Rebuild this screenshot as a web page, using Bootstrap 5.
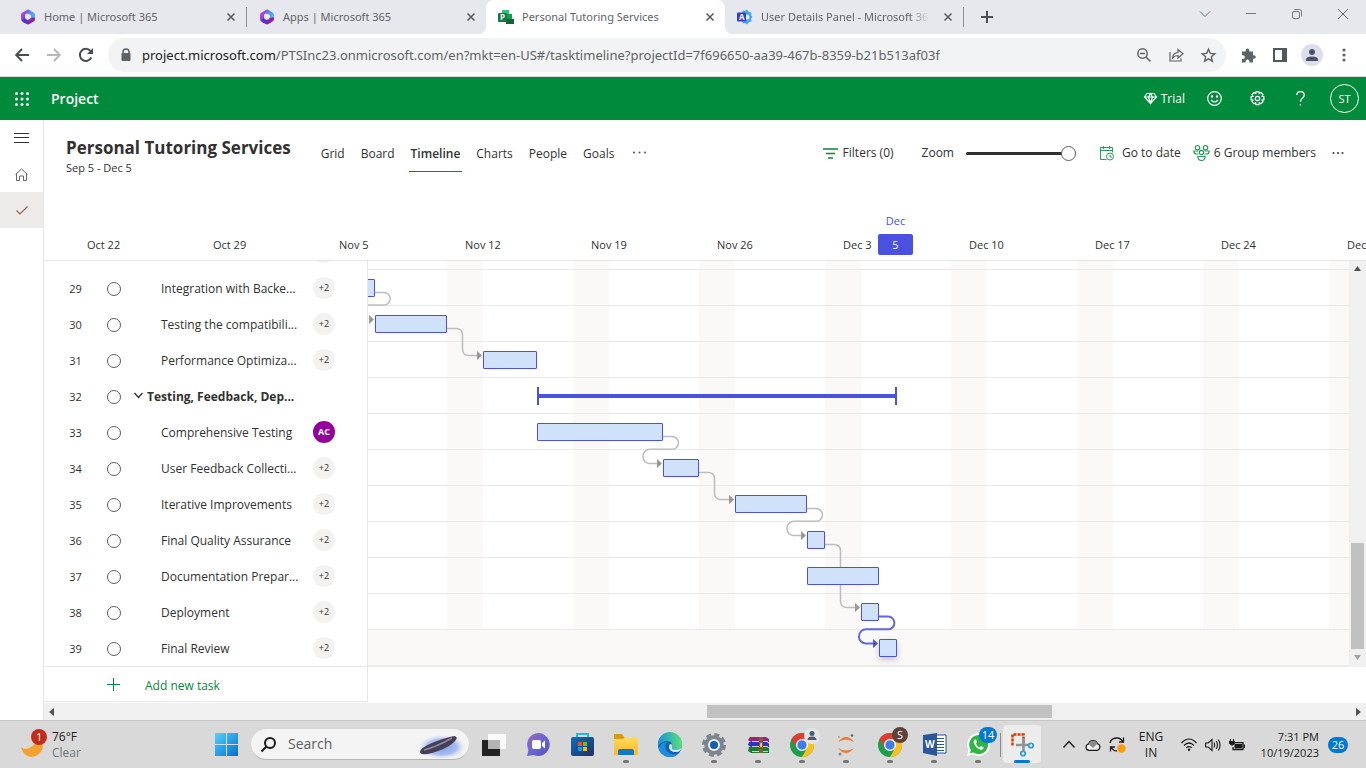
<!DOCTYPE html>
<html lang="en">
<head>
<meta charset="utf-8">
<meta name="viewport" content="width=device-width, initial-scale=1">
<title>Personal Tutoring Services</title>
<link href="https://cdn.jsdelivr.net/npm/bootstrap@5.3.0/dist/css/bootstrap.min.css" rel="stylesheet">
<style>
  :root { --ink:#323130; --line:#e6e6e6; --brand:#008a3c; --day:18px; --blue:#4a50df; }
  body { font-family:"Open Sans","Noto Sans",sans-serif; font-size:12px; line-height:16px; color:var(--ink); height:100vh; min-height:768px; overflow:hidden; }
  button { border:0; background:none; padding:0; color:inherit; font:inherit; display:inline-flex; align-items:center; justify-content:center; flex:none; }
  svg { display:block; flex:none; overflow:visible; }
  a { color:inherit; text-decoration:none; }

  .tabstrip { height:34px; background:#e7e8ed; padding-left:8px; color:#5f6368; }
  .wtab { width:239px; padding:0 5px 0 12px; position:relative; height:34px; }
  .wtab .ttl { overflow:hidden; flex:1; font-family:"Noto Sans","Open Sans",sans-serif; font-size:11px; }
  .wtab .fade-out { -webkit-mask-image:linear-gradient(90deg,#000 88%,transparent); mask-image:linear-gradient(90deg,#000 88%,transparent); }
  .wtab.sep { border-right:1px solid #8c8f94; height:20px; }
  .wtab.on { background:#fff; border-radius:8px 8px 0 0; }
  .wtab.on::before, .wtab.on::after { content:""; position:absolute; bottom:0; width:8px; height:8px; }
  .wtab.on::before { left:-8px; background:radial-gradient(circle at 0 0,transparent 8px,#fff 8px); }
  .wtab.on::after { right:-8px; background:radial-gradient(circle at 100% 0,transparent 8px,#fff 8px); }
  .xbtn { width:20px; }
  .winbtn { width:46px; height:28px; }

  .toolbar { height:43px; border-bottom:1px solid #d4d6d8; padding:0 6px; color:#5f6368; }
  .tb { width:32px; height:32px; }
  .omni { background:#f1f3f4; border-radius:17px; height:34px; padding:0 2px 0 12px; margin-left:6px; margin-right:6px; }
  .omni .url { font-family:"Noto Sans","Open Sans",sans-serif; font-size:13px; line-height:20px; white-space:nowrap; overflow:hidden; margin-left:10px; }
  .omni .url b { font-weight:400; color:#202124; }

  .suite { background:var(--brand); height:43px; color:#fff; padding-right:7px; }
  .suite .brandname { font-size:14px; font-weight:600; }
  .sbtn { width:43px; height:43px; }
  .me { width:29px; height:29px; border:1px solid #fff; border-radius:50%; font-size:11px; }

  .rail { width:44px; border-right:1px solid var(--line); }
  .rail button { height:36px; width:100%; }
  .rail .sel { background:#edebe9; }

  .phead { height:105px; padding-left:22px; }
  .phead h1 { font-size:17px; line-height:24px; font-weight:700; margin:0; }
  .phead .span-dates { font-size:11px; }
  .views { padding-top:17px; }
  .views a { display:block; padding:9px 2px; line-height:16px; }
  .views a.act { font-weight:600; border-bottom:1px solid var(--brand); }
  .cmds { height:66px; padding-right:22px; }
  .zoomer { -webkit-appearance:none; appearance:none; width:110px; height:16px; background:none; margin:0; }
  .zoomer::-webkit-slider-runnable-track { height:3px; border-radius:2px; background:#323130; }
  .zoomer::-webkit-slider-thumb { -webkit-appearance:none; width:15px; height:15px; margin-top:-6px; border-radius:50%; background:#fff; border:1px solid #605e5c; }

  .dates { height:36px; display:grid; grid-auto-flow:column; grid-auto-columns:126px; justify-content:start; padding-left:43px; border-bottom:1px solid var(--line); overflow:hidden; font-size:11px; padding-top:12px; }
  .today { position:absolute; left:calc(43px + 126px * 6 + 35px); top:93px; width:35px; font-size:11px; text-align:center; color:var(--blue); }
  .today span { display:block; background:var(--blue); color:#fff; border-radius:2px; line-height:21px; margin-top:5px; }

  .board { overflow:hidden; height:406px; }
  .tasks { width:324px; border-right:1px solid var(--line); overflow:hidden; }
  .tasks table { width:323px; table-layout:fixed; margin-top:-27px; border-collapse:collapse; }
  .tasks tr { height:36px; }
  .tasks td { padding:2px 0 0; vertical-align:middle; }
  .tasks .num { width:63px; text-align:center; font-size:11px; }
  .tasks .tick { width:27px; }
  .tasks .who { width:54px; padding-top:0; }
  .tasks .nm { white-space:nowrap; padding-left:27px; }
  .tasks .nm.grp { padding-left:0; font-weight:700; }
  .ring { -webkit-appearance:none; appearance:none; width:14px; height:14px; border:1px solid #605e5c; border-radius:50%; display:block; margin:0; }
  .pill { width:22px; height:22px; border-radius:50%; background:#f3f2f1; font-size:9px; display:flex; align-items:center; justify-content:center; }
  .pill.ac { background:#94009a; color:#fff; font-weight:700; }
  .addrow { height:36px; width:324px; margin-top:-1px; border:1px solid var(--line); border-left:0; background:#fff; color:var(--brand); padding-left:63px; gap:25px; position:relative; }

  .gantt { overflow:hidden; position:relative; }
  .gantt .lanes { margin-top:-27px; background:repeating-linear-gradient(90deg,transparent 0 79px,#faf9f8 79px 115px,transparent 115px 126px); }
  .lane { height:36px; border-bottom:1px solid #e9e9e9; padding-top:9px; }
  .lane.last { height:37px; border-bottom:2px solid #edebe9; background:#faf9f8; }
  .tbar { height:18px; position:relative; z-index:2; border:1px solid var(--blue); border-radius:1px; background:#cfe2fa; margin-left:calc(7px + var(--day) * var(--at)); width:calc(var(--day) * var(--len)); }
  .lane.last .tbar { box-shadow:0 3px 6px rgba(0,0,0,.2); }
  .tbar.sum { background:linear-gradient(var(--blue),var(--blue)) center/100% 4px no-repeat; border-width:0 2px; border-radius:0; }
  .links { position:absolute; left:0; top:0; z-index:1; }

  .vbar { width:17px; background:#f0f0f0; padding:5px 2px 7px; }
  .vbar i { display:block; height:106px; background:#c1c1c1; width:13px; margin-top:auto; margin-bottom:6px; }
  .hbar { height:17px; background:#f0f0f0; padding:0 5px; }
  .hbar i { display:block; height:13px; background:#c1c1c1; }

  .taskbar { height:48px; background:#d9d9d9; border-top:1px solid #c6c6c6; color:#1b1b1b; }
  .wx { width:204px; padding-left:20px; }
  .ti { width:44px; height:47px; position:relative; }
  .ti.run::after { content:""; position:absolute; bottom:5px; left:19px; width:6px; height:3px; border-radius:2px; background:#767676; }
  .ti.cur::before { content:""; position:absolute; left:3px; top:4px; width:38px; height:38px; border-radius:4px; background:#ececec; }
  .ti.cur::after { left:14px; width:16px; background:#0078d4; }
  .ti svg { position:relative; z-index:1; }
  .seek { width:218px; height:31px; margin:0 3px; border-radius:16px; background:#f4f4f4; border-bottom:1px solid #b5b5b5; overflow:hidden; padding-left:10px; }
  .seek input { border:0; background:none; outline:0; font-size:14px; width:130px; padding:0; color:#606060; }
  .seek input::placeholder { color:#606060; }
  .bub { position:absolute; z-index:3; border-radius:9px; font-size:11px; line-height:16px; height:16px; text-align:center; color:#fff; }
  .bub.who-a { right:4px; top:7px; width:16px; background:#e1e5ea; }
  .bub.who-s { right:4px; top:6px; width:16px; background:#5d4037; }
  .bub.cnt { right:3px; top:6px; width:18px; background:#0078d4; }
  .tdiv { width:1px; height:24px; margin-right:-1px; background:#8a8a8a; }
  .trayb { width:24px; height:40px; }
  .lang { width:48px; padding-right:4px; }
  .clock { width:70px; font-size:11px; }
  .num26 { width:20px; height:16px; border-radius:8px; background:#0078d4; color:#fff; font-size:11px; text-align:center; margin-left:9px; margin-right:18px; }
</style>
</head>
<body class="d-flex flex-column bg-white">

<!-- shared symbols -->
<svg width="0" height="0" class="position-absolute">
  <defs>
    <linearGradient id="g1" x1="0" y1="0" x2="1" y2="1"><stop offset="0" stop-color="#c84bea"/><stop offset="1" stop-color="#5b2fc0"/></linearGradient>
    <linearGradient id="g2" x1="0" y1="0" x2="1" y2="1"><stop offset="0" stop-color="#5468e8"/><stop offset="1" stop-color="#55c8f5"/></linearGradient>
    <linearGradient id="g3" x1="0" y1="0" x2="1" y2="1"><stop offset="0" stop-color="#55d0ff"/><stop offset="1" stop-color="#0070d0"/></linearGradient>
    <linearGradient id="g4" x1="0" y1="0" x2="1" y2="0"><stop offset="0" stop-color="#1590dc"/><stop offset="1" stop-color="#5be07a"/></linearGradient>
    <linearGradient id="g5" x1="0" y1="0" x2="0" y2="1"><stop offset="0" stop-color="#ffdc5a"/><stop offset="1" stop-color="#f9b92b"/></linearGradient>
    <linearGradient id="g6" x1="0" y1="0" x2="1" y2="1"><stop offset="0" stop-color="#0f6cbf"/><stop offset="1" stop-color="#1d3263"/></linearGradient>
    <radialGradient id="g7"><stop offset="0" stop-color="#7fa0e8"/><stop offset=".6" stop-color="#a9bdf0"/><stop offset="1" stop-color="#f4f4f4" stop-opacity="0"/></radialGradient>
    <linearGradient id="g8" x1="0" y1="0" x2="1" y2="1"><stop offset="0" stop-color="#9a68b8"/><stop offset=".5" stop-color="#6a66d6"/><stop offset="1" stop-color="#5550c0"/></linearGradient>
    <symbol id="m365" viewBox="0 0 16 16"><path d="M8 .5 2.500 3.400Q1 4.300 1 6v4q0 1.800 1.500 2.600L5 14V6.500Q5 5 6.500 4.300L11 2z" fill="url(#g1)"/><path d="m8 .5 5.500 3Q15 4.300 15 6v4.500L11 8V7Q11 5.500 9 5L6 4.500 7.500 1z" fill="url(#g2)"/><path d="M15 8.500V10q0 1.700-1.500 2.600L9.500 15q-1.500.8-3 0L3 13l4.500-2 3.500-2.500z" fill="#8a1fb0"/><path d="M1.500 11.500 5 9l3 2.500L5 14z" fill="#3f3bd0"/><circle cx="8" cy="8" r="2.600" fill="#e7e8ed"/></symbol>
    <symbol id="x" viewBox="0 0 10 10"><path d="m1.500 1.500 7 7m0-7-7 7" stroke="#55585d" stroke-width="1.500"/></symbol>
    <symbol id="chrome" viewBox="0 0 24 24"><circle cx="12" cy="12" r="12" fill="#1e9e4a"/><path d="M1.600 6A12 12 0 0 1 22.400 6H12l-5.200 9z" fill="#e33b2e"/><path d="M22.400 6A12 12 0 0 1 12 24l5.200-9L12 6z" fill="#fbc116"/><circle cx="12" cy="12" r="6" fill="#fff"/><circle cx="12" cy="12" r="4.700" fill="#3b7ded"/></symbol>
  </defs>
</svg>

<!-- browser tabs -->
<div class="tabstrip d-flex align-items-center flex-shrink-0">
  <div class="wtab sep d-flex align-items-center gap-2"><svg width="16" height="16"><use href="#m365"/></svg><span class="ttl text-nowrap">Home | Microsoft 365</span><button class="xbtn" aria-label="Close tab"><svg width="10" height="10"><use href="#x"/></svg></button></div>
  <div class="wtab d-flex align-items-center gap-2"><svg width="16" height="16"><use href="#m365"/></svg><span class="ttl text-nowrap">Apps | Microsoft 365</span><button class="xbtn" aria-label="Close tab"><svg width="10" height="10"><use href="#x"/></svg></button></div>
  <div class="wtab on d-flex align-items-center gap-2">
    <svg width="16" height="16" viewBox="0 0 16 16"><path d="M4 1h7v5H4z" fill="#31c178"/><path d="M8 5h6v5H8z" fill="#189b50"/><path d="M8 10h8v5H8z" fill="#0b6634"/><path d="M4 5h4v8H4z" fill="#0d7c3f"/><rect y="4" width="9" height="9" rx="1" fill="#107c41"/><text x="2" y="11" font-size="8" font-weight="700" fill="#fff">P</text></svg>
    <span class="ttl text-nowrap">Personal Tutoring Services</span><button class="xbtn" aria-label="Close tab"><svg width="10" height="10"><use href="#x"/></svg></button></div>
  <div class="wtab sep d-flex align-items-center gap-2">
    <svg width="16" height="16" viewBox="0 0 16 16"><path d="m6 1.500 2 .5 2-1.500 2 2.500 2.500.5-.5 2.500 1.500 2-1.500 2 .5 2.500-2.500.5-2 2.500-2-1.500-2 .5-1-3V4z" fill="#3fa5f5"/><circle cx="10" cy="8" r="2.500" fill="#e7e8ed"/><rect y="3.500" width="9" height="9" rx="1" fill="#3a3fc8"/><text x="2" y="11" font-size="8" font-weight="700" fill="#fff">A</text></svg>
    <span class="ttl text-nowrap fade-out">User Details Panel - Microsoft 365</span><button class="xbtn" aria-label="Close tab"><svg width="10" height="10"><use href="#x"/></svg></button></div>
  <button class="winbtn" aria-label="New tab"><svg width="12" height="12" viewBox="0 0 12 12"><path d="M6 0v12M0 6h12" stroke="#4b4e52" stroke-width="2"/></svg></button>
  <div class="ms-auto d-flex align-self-start">
    <button class="winbtn" aria-label="Search tabs"><svg width="10" height="6" viewBox="0 0 10 6" fill="none" stroke="#4d7468"><path d="m0 .5 5 5 5-5"/></svg></button>
    <button class="winbtn" aria-label="Minimize"><svg width="10" height="2"><path d="M0 .5h10" stroke="#777"/></svg></button>
    <button class="winbtn" aria-label="Restore"><svg width="10" height="10" viewBox="0 0 10 10" fill="none" stroke="#777"><rect x=".5" y="2.500" width="7" height="7" rx="1.500"/><path d="M2.500 .5h5q2 0 2 2v5"/></svg></button>
    <button class="winbtn" aria-label="Close"><svg width="10" height="10" viewBox="0 0 10 10"><path d="m0 0 10 10M10 0 0 10" stroke="#666"/></svg></button>
  </div>
</div>

<!-- address bar -->
<div class="toolbar d-flex align-items-center">
  <button class="tb" aria-label="Back"><svg width="14" height="14" viewBox="0 0 14 14" fill="none" stroke="#4a4d51" stroke-width="2"><path d="M14 7H1.500M7 1 1.200 7 7 13"/></svg></button>
  <button class="tb" aria-label="Forward"><svg width="14" height="14" viewBox="0 0 14 14" fill="none" stroke="#b5b7ba" stroke-width="2"><path d="M0 7h12.500M7 1l5.800 6L7 13"/></svg></button>
  <button class="tb" aria-label="Reload"><svg width="14" height="14" viewBox="0 0 14 14"><path d="M12.300 9.500A6 6 0 1 1 11.500 3" fill="none" stroke="#4a4d51" stroke-width="2"/><path d="M14 0v6H8z" fill="#4a4d51"/></svg></button>
  <div class="omni d-flex align-items-center flex-grow-1">
    <svg width="12" height="14" viewBox="0 0 12 14"><path d="M3 6V4a3 3 0 0 1 6 0v2" fill="none" stroke="#5f6368" stroke-width="1.500"/><rect x="1.500" y="5" width="9" height="8" rx="1" fill="#5f6368"/></svg>
    <span class="url me-auto"><b>project.microsoft.com</b>/PTSInc23.onmicrosoft.com/en?mkt=en-US#/tasktimeline?projectId=7f696650-aa39-467b-8359-b21b513af03f</span>
    <button class="tb" aria-label="Zoom"><svg width="14" height="14" viewBox="0 0 14 14" fill="none" stroke="#5f6368" stroke-width="1.500"><circle cx="5.500" cy="5.500" r="4.700"/><path d="M9 9l4.500 4.500M3 5.500h5"/></svg></button>
    <button class="tb" aria-label="Share"><svg width="15" height="14" viewBox="0 0 15 14" fill="none" stroke="#5f6368" stroke-width="1.200"><path d="M1 4v9h11v-2.500M3.500 10Q4 5 9 4.500V1.500l5 4.300-5 4.200V7.500Q6 7.500 3.500 10z"/></svg></button>
    <button class="tb" aria-label="Bookmark"><svg width="15" height="14" viewBox="0 0 15 14" fill="none" stroke="#5f6368" stroke-width="1.400"><path d="m7.500 1.200 1.800 4.200 4.500.4-3.400 3 1 4.400-3.900-2.300-3.900 2.300 1-4.400-3.400-3 4.500-.4z"/></svg></button>
  </div>
  <button class="tb" aria-label="Extensions"><svg width="15" height="15" viewBox="0 0 15 15" fill="#5f6368"><path d="M1 3.500h3.700V2.300a1.800 1.800 0 0 1 3.600 0v1.200H12v3.700h1a1.800 1.800 0 0 1 0 3.600h-1v3.700H8.400v-1a1.900 1.900 0 0 0-3.800 0v1H1v-3.500h1a1.900 1.900 0 0 0 0-3.800H1z"/></svg></button>
  <button class="tb" aria-label="Side panel"><svg width="14" height="14" viewBox="0 0 14 14"><path d="M1 1h12v12H1z" fill="none" stroke="#53565a" stroke-width="2"/><path d="M9 1h4v12H9z" fill="#53565a"/></svg></button>
  <button class="tb" aria-label="Profile"><svg width="22" height="22" viewBox="0 0 22 22" fill="#4c5172"><circle cx="11" cy="11" r="11" fill="#dcdee8"/><circle cx="11" cy="8" r="3"/><path d="M5 17v-1.500Q5 12.500 11 12.500t6 3V17z"/></svg></button>
  <button class="tb" aria-label="Menu"><svg width="4" height="14" viewBox="0 0 4 14" fill="#5f6368"><circle cx="2" cy="2" r="1.600"/><circle cx="2" cy="7" r="1.600"/><circle cx="2" cy="12" r="1.600"/></svg></button>
</div>

<!-- suite header -->
<header class="suite d-flex align-items-center">
  <button class="sbtn" aria-label="App launcher"><svg width="14" height="14" viewBox="0 0 14 14" fill="#fff"><g id="dr"><circle cx="1.500" cy="1.500" r="1.500"/><circle cx="7" cy="1.500" r="1.500"/><circle cx="12.500" cy="1.500" r="1.500"/></g><use href="#dr" y="5.500"/><use href="#dr" y="11"/></svg></button>
  <a class="brandname ms-2" href="#">Project</a>
  <button class="ms-auto gap-1 me-2"><svg width="13" height="11" viewBox="0 0 13 11" fill="none" stroke="#fff" stroke-width="1.200"><path d="M3 .5h7l2.500 3.500-6 6.500L.5 4zM.5 4h12M4.500 4l2 6 2-6-2-3.500z"/></svg>Trial</button>
  <button class="sbtn" aria-label="Feedback"><svg width="15" height="15" viewBox="0 0 15 15" fill="none" stroke="#fff" stroke-width="1.200"><circle cx="7.500" cy="7.500" r="6.800"/><path d="M4 9q3.500 4 7 0"/><circle cx="5" cy="5.500" r=".6" fill="#fff"/><circle cx="10" cy="5.500" r=".6" fill="#fff"/></svg></button>
  <button class="sbtn" aria-label="Settings"><svg width="15" height="15" viewBox="0 0 15 15" fill="none" stroke="#fff" stroke-width="1.200"><circle cx="7.500" cy="7.500" r="2.200"/><path d="M5.700 2.600 6 .8h3l.3 1.800 1.600-1 2.100 2.100-1 1.600 1.900.4v3l-1.900.4 1 1.600-2.100 2.100-1.600-1-.3 1.900H6l-.3-1.900-1.600 1L2 10.700l1-1.600-1.900-.4v-3L3 5.300 2 3.700l2.100-2.100z"/></svg></button>
  <button class="sbtn" aria-label="Help"><svg width="9" height="15" viewBox="0 0 9 15" fill="none" stroke="#fff" stroke-width="1.300"><path d="M.8 4Q.8.700 4.500.700T8.200 4Q8.200 6 6.200 7.500T4.500 11M4.500 13v1.500"/></svg></button>
  <button class="me ms-2" aria-label="Account">ST</button>
</header>

<div class="d-flex flex-grow-1 overflow-hidden">
  <nav class="rail flex-shrink-0">
    <button aria-label="Expand navigation"><svg width="15" height="10" viewBox="0 0 15 10"><path d="M0 .5h15M0 4.500h15M0 9.500h15" stroke="#323130"/></svg></button>
    <button aria-label="Home"><svg width="13" height="13" viewBox="0 0 13 13" fill="none" stroke="#666"><path d="M.5 6.500 6.500 1l6 5.500M1.500 6v6.500h3V8h4v4.500h3V6"/></svg></button>
    <button class="sel" aria-label="My projects"><svg width="12" height="9" viewBox="0 0 12 9" fill="none" stroke="#a0604a" stroke-width="1.200"><path d="m.5 4.500 3.500 3.500L11.500.5"/></svg></button>
  </nav>

  <main class="flex-grow-1 d-flex flex-column position-relative overflow-hidden">
    <!-- project title, views and commands -->
    <div class="phead d-flex align-items-start">
      <div class="pt-3"><h1 class="text-nowrap">Personal Tutoring Services</h1><div class="span-dates">Sep 5 - Dec 5</div></div>
      <nav class="views d-flex ms-4 gap-2">
        <a href="#" class="ms-1">Grid</a><a href="#" class="ms-1">Board</a><a href="#" class="act ms-1">Timeline</a><a href="#" class="ms-1">Charts</a><a href="#" class="ms-1">People</a><a href="#" class="ms-1">Goals</a>
        <button class="ms-1 ps-1" aria-label="More views"><svg width="15" height="8" viewBox="0 0 15 8" fill="#555"><circle cx="2" cy="1.500" r="1"/><circle cx="7.500" cy="1.500" r="1"/><circle cx="13" cy="1.500" r="1"/></svg></button>
      </nav>
      <div class="cmds d-flex align-items-center ms-auto">
        <button class="gap-1 me-4"><svg width="16" height="11" viewBox="0 0 16 11" stroke="#008a3c" stroke-width="1.300"><path d="M0 1h15M3 5.500h9M5 10h5"/></svg>Filters (0)</button>
        <label for="zoom" class="me-2 pe-1 ms-1">Zoom</label>
        <input id="zoom" class="zoomer me-3" type="range" min="0" max="4" value="4">
        <button class="gap-2 ms-2 me-2 pe-1"><svg width="14" height="15" viewBox="0 0 14 15" fill="none" stroke="#2a9a5a"><path d="M6.500 13.500h-6v-12h12v5M.5 4.500h12M3.500 0v3M9.500 0v3"/><circle cx="10" cy="10.500" r="3.500"/><path d="M10 8.500v2.500h2"/></svg>Go to date</button>
        <button class="gap-1"><svg width="17" height="16" viewBox="0 0 17 16" fill="none" stroke="#2a9a5a" stroke-width="1.200"><circle cx="4.500" cy="2.700" r="2.200"/><circle cx="12.500" cy="2.700" r="2.200"/><circle cx="8.500" cy="7.500" r="2.200"/><path d="M5.500 9H3Q.8 8.500.8 6h4.400M11.500 9H14q2.200-.5 2.200-3h-4.400M4.800 11.500h7.400q-.3 4-3.700 4t-3.700-4z"/></svg>6 Group members</button>
        <button class="ms-3" aria-label="More"><svg width="12" height="4" viewBox="0 0 12 4" fill="#444"><circle cx="1.500" cy="2" r="1.100"/><circle cx="6" cy="2" r="1.100"/><circle cx="10.500" cy="2" r="1.100"/></svg></button>
      </div>
    </div>

    <div class="dates text-nowrap"><span>Oct 22</span><span>Oct 29</span><span>Nov 5</span><span>Nov 12</span><span>Nov 19</span><span>Nov 26</span><span>Dec 3</span><span>Dec 10</span><span>Dec 17</span><span>Dec 24</span><span>Dec 31</span></div>
    <div class="today">Dec<span>5</span></div>

    <div class="board d-flex flex-shrink-0">
      <div class="tasks flex-shrink-0">
        <table>
          <tr><td class="num"></td><td class="tick"></td><td></td><td class="who"><span class="pill"></span></td></tr>
          <tr><td class="num">29</td><td><input type="checkbox" class="ring" aria-label="Complete task 29"></td><td class="nm">Integration with Backe...</td><td class="who"><span class="pill">+2</span></td></tr>
          <tr><td class="num">30</td><td><input type="checkbox" class="ring" aria-label="Complete task 30"></td><td class="nm">Testing the compatibili...</td><td class="who"><span class="pill">+2</span></td></tr>
          <tr><td class="num">31</td><td><input type="checkbox" class="ring" aria-label="Complete task 31"></td><td class="nm">Performance Optimiza...</td><td class="who"><span class="pill">+2</span></td></tr>
          <tr><td class="num">32</td><td><input type="checkbox" class="ring" aria-label="Complete task 32"></td><td class="nm grp"><button class="me-1" aria-label="Collapse"><svg width="9" height="9" viewBox="0 0 9 9" fill="none" stroke="#323130" stroke-width="1.300"><path d="m.5 1 4 4.500L8.500 1"/></svg></button>Testing, Feedback, Dep...</td><td class="who"></td></tr>
          <tr><td class="num">33</td><td><input type="checkbox" class="ring" aria-label="Complete task 33"></td><td class="nm">Comprehensive Testing</td><td class="who"><span class="pill ac">AC</span></td></tr>
          <tr><td class="num">34</td><td><input type="checkbox" class="ring" aria-label="Complete task 34"></td><td class="nm">User Feedback Collecti...</td><td class="who"><span class="pill">+2</span></td></tr>
          <tr><td class="num">35</td><td><input type="checkbox" class="ring" aria-label="Complete task 35"></td><td class="nm">Iterative Improvements</td><td class="who"><span class="pill">+2</span></td></tr>
          <tr><td class="num">36</td><td><input type="checkbox" class="ring" aria-label="Complete task 36"></td><td class="nm">Final Quality Assurance</td><td class="who"><span class="pill">+2</span></td></tr>
          <tr><td class="num">37</td><td><input type="checkbox" class="ring" aria-label="Complete task 37"></td><td class="nm">Documentation Prepar...</td><td class="who"><span class="pill">+2</span></td></tr>
          <tr><td class="num">38</td><td><input type="checkbox" class="ring" aria-label="Complete task 38"></td><td class="nm">Deployment</td><td class="who"><span class="pill">+2</span></td></tr>
          <tr><td class="num">39</td><td><input type="checkbox" class="ring" aria-label="Complete task 39"></td><td class="nm">Final Review</td><td class="who"><span class="pill">+2</span></td></tr>
        </table>
      </div>
      <div class="gantt flex-grow-1">
        <div class="lanes">
          <div class="lane"></div>
          <div class="lane"><div class="tbar" style="--at:-3;--len:3"></div></div>
          <div class="lane"><div class="tbar" style="--at:0;--len:4"></div></div>
          <div class="lane"><div class="tbar" style="--at:6;--len:3"></div></div>
          <div class="lane"><div class="tbar sum" style="--at:9;--len:20"></div></div>
          <div class="lane"><div class="tbar" style="--at:9;--len:7"></div></div>
          <div class="lane"><div class="tbar" style="--at:16;--len:2"></div></div>
          <div class="lane"><div class="tbar" style="--at:20;--len:4"></div></div>
          <div class="lane"><div class="tbar" style="--at:24;--len:1"></div></div>
          <div class="lane"><div class="tbar" style="--at:24;--len:4"></div></div>
          <div class="lane"><div class="tbar" style="--at:27;--len:1"></div></div>
          <div class="lane last"><div class="tbar" style="--at:28;--len:1"></div></div>
        </div>
        <!-- dependency links -->
        <svg class="links" width="981" height="405" viewBox="368 261 981 405">
          <g fill="none" stroke="#bdbdbd" stroke-width="1.500">
            <path d="M375 292.500h9a6.200 6.200 0 0 1 0 12.500H360"/>
            <path d="M447 328.500h9q6.500 0 6.500 6.500v14q0 6.500 6.500 6.500h9"/>
            <path d="M663 436.500h9a6.400 6.400 0 0 1 0 12.800H650a7 7 0 0 0 0 14.200h8"/>
            <path d="M699 472.500h9q6.500 0 6.500 6.500v14q0 6.500 6.500 6.500h9"/>
            <path d="M807 508.500h9a6.400 6.400 0 0 1 0 12.800H794a7 7 0 0 0 0 14.200h8"/>
            <path d="M825 544.500h9q6.500 0 6.500 6.500v50q0 6.500 6.500 6.500h9"/>
          </g>
          <path d="M369 315v9l5-4.500zM477 351v9l5-4.500zM657 459v9l5-4.500zM729 495v9l5-4.500zM801 531v9l5-4.500zM855 603v9l5-4.500z" fill="#999"/>
          <path d="M879 616.500h9a6.400 6.400 0 0 1 0 12.800H866a7 7 0 0 0 0 14.200h8" fill="none" stroke="#6266e2" stroke-width="2"/>
          <path d="M873 639v9l5-4.500z" fill="#4a50df"/>
        </svg>
      </div>
      <div class="vbar d-flex flex-column align-items-center flex-shrink-0">
        <svg width="7" height="5" viewBox="0 0 7 5"><path d="M3.500 0 7 5H0z" fill="#505050"/></svg><i></i><svg width="7" height="5" viewBox="0 0 7 5"><path d="M0 0h7L3.500 5z" fill="#a0a0a0"/></svg>
      </div>
    </div>
    <button class="addrow justify-content-start"><svg width="13" height="13" viewBox="0 0 13 13"><path d="M6.500 0v13M0 6.500h13" stroke="#008a3c"/></svg><span class="pt-1">Add new task</span></button>
    <div class="hbar d-flex align-items-center mt-auto">
      <svg width="5" height="8" viewBox="0 0 5 8"><path d="M5 0v8L0 4z" fill="#505050"/></svg><i style="margin-left:49.8%;width:26.3%"></i><svg class="ms-auto" width="5" height="8" viewBox="0 0 5 8"><path d="M0 0v8l5-4z" fill="#505050"/></svg>
    </div>
  </main>
</div>

<!-- desktop taskbar -->
<footer class="taskbar d-flex align-items-center flex-shrink-0">
  <div class="d-flex align-items-center wx">
    <svg width="28" height="30" viewBox="0 0 28 30"><path d="M1 17q4 4 10 0t6-9q8 5 5 12-4 7-11 7-8-1-10-10z" fill="#f5a12d"/><circle cx="19" cy="7" r="8" fill="#c42b1c"/><text x="16" y="11" font-size="11" fill="#fff">1</text></svg>
    <div class="ms-1">76°F<br><span class="text-secondary">Clear</span></div>
  </div>
  <div class="d-flex align-items-center">
    <button class="ti" aria-label="Start"><svg width="23" height="23" viewBox="0 0 23 23" fill="url(#g3)"><path d="M0 0h11v11H0zM12 0h11v11H12zM0 12h11v11H0zM12 12h11v11H12z"/></svg></button>
    <div class="seek d-flex align-items-center">
      <svg width="15" height="15" viewBox="0 0 15 15" fill="none" stroke="#1b1b1b" stroke-width="2"><circle cx="9" cy="6" r="5"/><path d="m5.500 9.500-5 5"/></svg>
      <input class="ms-2 ps-1" type="text" placeholder="Search" aria-label="Search">
      <svg width="50" height="30" viewBox="0 0 50 30"><ellipse cx="28" cy="18" rx="25" ry="13" fill="url(#g7)"/><path d="M6 23q0-4 12-9T40 7q6 1-1 7T18 24q-11 3-12-1z" fill="#453f55"/><path d="M10 21q12-3 28-12" stroke="#8f86a0" stroke-width="1.500" fill="none"/></svg>
    </div>
    <button class="ti" aria-label="Task view"><svg width="24" height="22" viewBox="0 0 24 22"><path d="M0 6h18v16H0z" fill="#222"/><path d="M6 0h18v15H6z" fill="#fafafa"/><path d="M6 6h12v9H6z" fill="#b4b4b4"/></svg></button>
    <button class="ti" aria-label="Chat"><svg width="23" height="23" viewBox="0 0 23 23"><path d="M11.500 0a11.500 11.500 0 1 1-5 22L0 23l1.500-6A11.500 11.500 0 0 1 11.500 0z" fill="url(#g8)"/><rect x="5" y="7" width="9" height="9" rx="2" fill="#fff"/><path d="m15 10 3-2.500v8L15 13z" fill="#fff"/></svg></button>
    <button class="ti" aria-label="Store"><svg width="23" height="23" viewBox="0 0 23 23"><path d="M6 5V1h11v4" fill="none" stroke="#2ab4ee" stroke-width="2"/><rect y="4" width="23" height="19" rx="2" fill="url(#g6)"/><path d="M7 9h4v4H7z" fill="#f25022"/><path d="M12 9h4v4h-4z" fill="#7fba00"/><path d="M7 14h4v4H7z" fill="#00a4ef"/><path d="M12 14h4v4h-4z" fill="#ffb900"/></svg></button>
    <button class="ti run" aria-label="File Explorer"><svg width="24" height="21" viewBox="0 0 24 21"><path d="M0 1q0-1 1-1h7l2 3h13v8H0z" fill="#d99a14"/><path d="M0 5h9l2-2h13v18H0z" fill="url(#g5)"/><path d="M4 21v-4q0-2 2-2h12q2 0 2 2v4z" fill="#1676c8"/></svg></button>
    <button class="ti" aria-label="Edge"><svg width="24" height="24" viewBox="0 0 24 24"><circle cx="12" cy="12" r="12" fill="#0f62b5"/><path d="M0 11A12 12 0 0 1 24 11q0 6-6 6-5 0-4-3 1-6-5-6Q4 8 0 13z" fill="url(#g4)"/><path d="M9 9q-4 4 0 9t11 3A12 12 0 0 1 9 23.600Q1 21 1 15q2-6 8-6z" fill="#1a8fe0"/><path d="M14 14q-1 3 4 3 4 0 6-3-1 5-6 5-7 0-7-5 0-3 2-3 1 0 1 3z" fill="#d9ecf8"/></svg></button>
    <button class="ti run" aria-label="Settings"><svg width="24" height="24" viewBox="0 0 24 24"><circle cx="12" cy="12" r="7.500" fill="none" stroke="#7c848d" stroke-width="4.500"/><circle cx="12" cy="12" r="10.500" fill="none" stroke="#7c848d" stroke-width="3" stroke-dasharray="5 3.250"/><circle cx="12" cy="12" r="6" fill="#eef2f6"/><circle cx="12" cy="12" r="4" fill="#1060ae"/></svg></button>
    <button class="ti run" aria-label="Archiver"><svg width="21" height="16" viewBox="0 0 21 16"><path d="M2 0h16l3 2v3H3L0 3z" fill="#96247d"/><path d="M1 5h18l2 2v3H3L0 8z" fill="#2438c8"/><path d="M1 10h18l2 1v5H3l-3-2z" fill="#1f7a36"/><path d="M4 4.500h16M4 9.500h16M4 14.500h16" stroke="#d8c8c8"/><path d="M11 0h4v16h-4z" fill="#8a5a2b"/><path d="M12 6h2v4h-2z" fill="#f1c84b"/></svg></button>
    <button class="ti run" aria-label="Chrome"><svg width="24" height="24"><use href="#chrome"/></svg><span class="bub who-a"><svg width="16" height="16" viewBox="0 0 16 16" fill="#4d5b6e"><circle cx="8" cy="5.500" r="2.500"/><path d="M3.500 12q0-3.500 4.500-3.500t4.500 3.500z"/></svg></span></button>
    <button class="ti run" aria-label="Jupyter"><svg width="18" height="22" viewBox="0 0 18 22"><path d="M1 8q8-10 16 0-8-5-16 0zM1 14q8 10 16 0-8 5-16 0z" fill="#f37726"/><circle cx="15" cy="1.500" r="1.300" fill="#666"/><circle cx="3" cy="20" r="1.500" fill="#888"/><circle cx="2" cy="3" r=".8" fill="#777"/></svg></button>
    <button class="ti run" aria-label="Chrome, profile S"><svg width="24" height="24"><use href="#chrome"/></svg><span class="bub who-s">S</span></button>
    <button class="ti run" aria-label="Word"><svg width="23" height="23" viewBox="0 0 23 23"><path d="M11 2h12v18H11z" fill="#fff" stroke="#2b579a"/><path d="M14 5.500h7M14 8.500h7M14 11.500h7M14 14.500h7M14 17.500h7" stroke="#2b579a"/><path d="M0 2 14 0v23L0 20z" fill="#2b579a"/><text x="2" y="15" font-size="10" font-weight="700" fill="#fff">W</text></svg></button>
    <button class="ti run" aria-label="WhatsApp"><svg width="23" height="23" viewBox="0 0 23 23"><path d="M11.500 0a11.500 11.500 0 1 1-5.500 21.600L0 23l1.500-6A11.500 11.500 0 0 1 11.500 0z" fill="#fff"/><path d="M11.500 2a9.500 9.500 0 1 1-5 17.500L3 20.300 4 17A9.500 9.500 0 0 1 11.500 2z" fill="#2bb741"/><path d="M8 6.500q-2 1-1 4 2 5 6.500 6.200 3 .3 3.300-2.200L14 13l-1.500 1.500Q9.500 13 9 10.500L10 9 9 6.500z" fill="#fff"/></svg><span class="bub cnt">14</span></button>
    <span class="tdiv"></span>
    <button class="ti run cur" aria-label="Snipping Tool"><svg width="23" height="23" viewBox="0 0 23 23"><path d="M1.500 12.500V1.500h11v9" fill="none" stroke="#d83b01" stroke-width="2.500" stroke-dasharray="3 1"/><path d="M5 12h13M12.500 5v15" stroke="#8b9299" stroke-width="2.500"/><circle cx="20" cy="12.500" r="2.200" fill="#fff" stroke="#29a0e0" stroke-width="1.800"/><circle cx="12" cy="20.500" r="2.200" fill="#fff" stroke="#29a0e0" stroke-width="1.800"/></svg></button>
  </div>
  <div class="ms-auto d-flex align-items-center">
    <button class="trayb" aria-label="Hidden icons"><svg width="12" height="7" viewBox="0 0 12 7" fill="none" stroke="#1b1b1b" stroke-width="1.400"><path d="m.5 6.500 5.500-6 5.500 6"/></svg></button>
    <button class="trayb" aria-label="OneDrive"><svg width="16" height="12" viewBox="0 0 16 12"><path d="M4 11.300a3.200 3.200 0 0 1-.5-6.300 4.800 4.800 0 0 1 9-.3 3.400 3.400 0 0 1-.5 6.600z" fill="#eee" stroke="#1b1b1b" stroke-width="1.200"/><path d="M3.500 5a4.800 4.800 0 0 1 9-.3L8 9z" fill="#8b8b8b"/></svg></button>
    <button class="trayb" aria-label="Update"><svg width="17" height="17" viewBox="0 0 17 17" fill="none" stroke="#1b1b1b" stroke-width="1.300"><path d="M1 7q1-5 7-5 4 0 6 4M14.500 1.500V6H10M1.500 15.500V11H6M2 11q2 4 6 4"/><circle cx="12.500" cy="12.500" r="4.200" fill="#ff9a0a" stroke="none"/></svg></button>
    <div class="text-center lang">ENG<br>IN</div>
    <button class="trayb" aria-label="Network"><svg width="16" height="13" viewBox="0 0 16 13" fill="none" stroke="#1b1b1b" stroke-width="1.200"><path d="M.5 5q7.500-8 15 0M3 7.500q5-5 10 0M5.300 9.800q2.700-2.500 5.400 0"/><circle cx="8" cy="11.700" r="1.200" fill="#1b1b1b" stroke="none"/></svg></button>
    <button class="trayb" aria-label="Volume"><svg width="16" height="14" viewBox="0 0 16 14" fill="none" stroke="#1b1b1b" stroke-width="1.100"><path d="M.6 5h2.600L7 1.500v11L3.200 9H.6zM9 4.500q1.500 2.500 0 5M11.200 3q2.500 4 0 8M13.300 1.500q3.500 5.500 0 11"/></svg></button>
    <button class="trayb" aria-label="Battery"><svg width="16" height="12" viewBox="0 0 16 12"><path d="M5 3.700h9v7H4V8" fill="none" stroke="#1b1b1b" stroke-width="1.300"/><path d="M5.500 5h7.500v4.500H5.500zM14.500 5.500H16V9h-1.500zM0 2h6v2.500L4 6.500H2L0 4.500zM1 0h1v2H1zM4 0h1v2H4z" fill="#1b1b1b"/></svg></button>
    <div class="text-end clock">7:31 PM<br>10/19/2023</div>
    <div class="num26">26</div>
  </div>
</footer>
<script src="https://cdn.jsdelivr.net/npm/bootstrap@5.3.0/dist/js/bootstrap.bundle.min.js"></script>
</body>
</html>
